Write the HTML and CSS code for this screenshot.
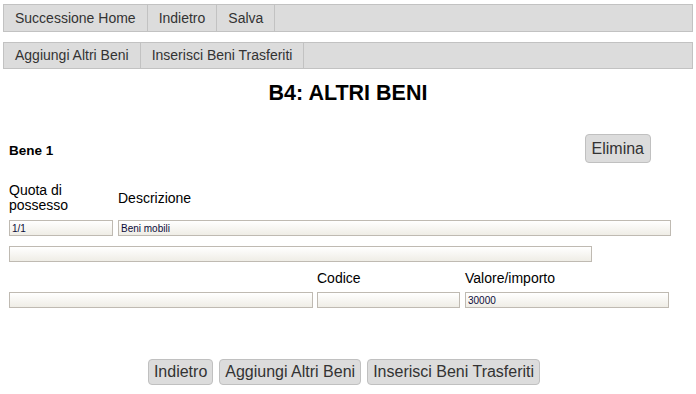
FILE: index.html
```html
<html>
    <head>
        <title>B4: Altri beni</title>
        <link rel="stylesheet" href="styles.css">
    </head>

    <body>
        <ul class="menu">
            <li>Successione Home</li>
            <li>Indietro</li>
            <li>Salva</li>
        </ul>
        <ul class="menu menu-second">
            <li>Aggiungi Altri Beni</li>
            <li>Inserisci Beni Trasferiti</li>
        </ul>

        <h1>B4: ALTRI BENI</h1>

        <div class="bene-head">
            <span class="bene-title">Bene 1</span>
            <button class="btn btn-elimina" type="button">Elimina</button>
        </div>

        <div class="row labels labels-top">
            <label class="col-quota">Quota di possesso</label>
            <label class="col-desc">Descrizione</label>
        </div>
        <div class="row row-inputs">
            <input class="field col-quota" type="text" value="1/1">
            <input class="field col-desc" type="text" value="Beni mobili">
        </div>
        <div class="row row-wide">
            <input class="field col-wide" type="text" value="">
        </div>

        <div class="row labels labels-bottom">
            <span class="col-extra"></span>
            <label class="col-codice">Codice</label>
            <label class="col-valore">Valore/importo</label>
        </div>
        <div class="row row-inputs">
            <input class="field col-extra" type="text" value="">
            <input class="field col-codice" type="text" value="">
            <input class="field col-valore" type="text" value="30000">
        </div>

        <div class="actions">
            <button class="btn" type="button">Indietro</button>
            <button class="btn" type="button">Aggiungi Altri Beni</button>
            <button class="btn" type="button">Inserisci Beni Trasferiti</button>
        </div>
    </body>
</html>
```

FILE: styles.css
```css
body{
    margin: 0;
    font-family: "Liberation Sans", Arial, sans-serif;
    color: #000;
}

ul{
    list-style: none;
    margin: 0;
    padding: 0;
}

li{
    list-style: none;
    margin: 0;
    padding: 0;
}

.menu{
    display: flex;
    margin: 4px 3px 0 3px;
    height: 28px;
    box-sizing: border-box;
    border: 1px solid #c2c2c2;
    background: #dcdcdc;
}

.menu li{
    padding: 0 11px;
    line-height: 26px;
    font-size: 14px;
    color: #333;
    border-right: 1px solid #c2c2c2;
}

.menu-second{
    margin-top: 10px;
    height: 27px;
}

.menu-second li{
    line-height: 25px;
}

h1{
    margin: 12px 0 0 0;
    text-align: center;
    font-size: 21.5px;
    line-height: 24px;
}

.bene-head{
    display: flex;
    align-items: center;
    justify-content: space-between;
    margin: 29px 45px 0 9px;
}

.bene-title{
    font-weight: bold;
    font-size: 13.5px;
    padding-top: 3px;
}

.btn{
    font-family: "Liberation Sans", Arial, sans-serif;
    font-size: 16px;
    color: #333;
    background: #dcdcdc;
    border: 1px solid #c0c0c0;
    border-radius: 4px;
    height: 26px;
    padding: 0 5px;
    margin: 0;
}

.btn-elimina{
    height: 29px;
    padding: 0 6px;
}

.row{
    display: flex;
    align-items: center;
    padding-left: 9px;
}

.labels{
    font-size: 14px;
}

.labels-top{
    margin-top: 20px;
    line-height: 15px;
}

.labels-bottom{
    margin-top: 8px;
    line-height: 17px;
}

.row-inputs{
    margin-top: 7px;
}

.labels-bottom + .row-inputs{
    margin-top: 5px;
}

.row-wide{
    margin-top: 10px;
}

.field{
    height: 16px;
    box-sizing: border-box;
    border: 1px solid #bfbab2;
    background: linear-gradient(#ffffff, #efede6);
    font-family: "Liberation Sans", Arial, sans-serif;
    font-size: 10px;
    color: #0c0c3a;
    padding: 0 2px;
    margin: 0;
}

.col-quota{
    width: 104px;
    flex: none;
}

.col-desc{
    width: 553px;
    margin-left: 5px;
    flex: none;
}

.col-wide{
    width: 583px;
}

.col-extra{
    width: 304px;
    flex: none;
}

.col-codice{
    width: 143px;
    margin-left: 4px;
    flex: none;
}

.col-valore{
    width: 204px;
    margin-left: 5px;
    flex: none;
}

.actions{
    display: flex;
    justify-content: center;
    gap: 6px;
    margin-top: 51px;
    padding-right: 8px;
}
```
